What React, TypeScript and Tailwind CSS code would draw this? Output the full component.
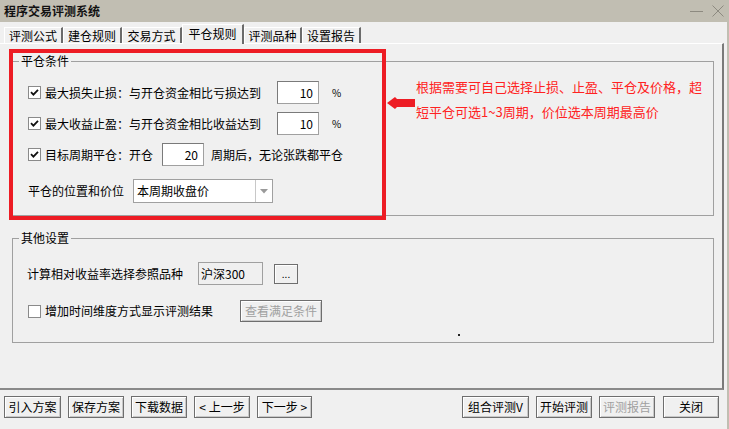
import React from 'react';

const font = { fontFamily: '"Noto Sans CJK SC", "Noto Sans", sans-serif' };

function Check({ checked }: { checked: boolean }) {
  return (
    <span className="w-[13px] h-[13px] bg-white border border-[#8a8a8a] flex items-center justify-center shrink-0">
      {checked && (
        <svg width="9" height="9" viewBox="0 0 9 9">
          <path d="M1 4.2 L3.4 6.6 L8 1.8" fill="none" stroke="#111" strokeWidth="1.8" />
        </svg>
      )}
    </span>
  );
}

function NumBox({ value, w }: { value: string; w: string }) {
  return (
    <div className={`${w} h-[23px] bg-white border border-[#a0a0a0] border-t-[#7a7a7a] border-l-[#7a7a7a] flex items-center justify-end pr-[5px] text-[12px]`}>
      {value}
    </div>
  );
}

function Btn({ label, w, disabled }: { label: string; w: string; disabled?: boolean }) {
  return (
    <button
      className={`${w} h-[22px] border border-[#6e6e6e] bg-[#f0f0f0] shadow-[inset_1px_1px_0_#fff,inset_-1px_-1px_0_#c8c8c8] text-[12px] leading-none flex items-center justify-center ${
        disabled ? 'text-[#a0a0a0]' : 'text-black'
      }`}
    >
      {label}
    </button>
  );
}

const tabs = [
  { name: '评测公式', w: 'w-[59px]' },
  { name: '建仓规则', w: 'w-[59px]' },
  { name: '交易方式', w: 'w-[60px]' },
  { name: '平仓规则', w: 'w-[62px]', active: true },
  { name: '评测品种', w: 'w-[58px]' },
  { name: '设置报告', w: 'w-[59px]' },
];

export default function App() {
  return (
    <div className="w-[729px] h-[429px] bg-[#f0f0f0] relative overflow-hidden text-black border-r-[2px] border-[#c1beb2]" style={font}>
      {/* title bar */}
      <div className="h-[22px] bg-[#c1beb2] flex items-center justify-between pl-[4px] pr-[3px]">
        <span className="text-[12px] font-bold text-[#111]">程序交易评测系统</span>
        <div className="flex items-center gap-[9px]">
          <span className="w-[13px] h-[1px] bg-[#8d8a80] mt-[1px]"></span>
          <svg width="12" height="12" viewBox="0 0 12 12">
            <path d="M0.5 0.5 L11.5 11.5 M11.5 0.5 L0.5 11.5" stroke="#8d8a80" strokeWidth="1" />
          </svg>
        </div>
      </div>

      {/* tabs */}
      <div className="h-[21px] flex items-end pl-[4px]">
        {tabs.map((t) =>
          t.active ? (
            <div
              key={t.name}
              className={`${t.w} h-[20px] -mb-[1px] z-10 bg-[#f0f0f0] border-t border-l border-white border-r-[2px] border-r-[#6b6b6b] flex items-center justify-center text-[12px] pb-[1px]`}
            >
              {t.name}
            </div>
          ) : (
            <div
              key={t.name}
              className={`${t.w} h-[16px] bg-[#f0f0f0] border-t border-l border-white border-r-[2px] border-r-[#6b6b6b] flex items-center justify-center text-[12px]`}
            >
              {t.name}
            </div>
          )
        )}
      </div>

      {/* panel */}
      <div className="w-[724px] h-[347px] border-t border-t-white border-r-[2px] border-r-[#7a7a7a] border-b-[2px] border-b-[#8a8a8a] pl-[12px] pt-[17px] relative">
        {/* group 1 */}
        <div className="relative w-[702px] h-[155px] border border-[#a0a0a0]">
          <span className="absolute -top-[8px] left-[6px] px-[2px] bg-[#f0f0f0] text-[12px] leading-[14px]">平仓条件</span>
          <div className="pt-[19px] pl-[15px] flex flex-col">
            <div className="h-[23px] flex items-center">
              <Check checked />
              <span className="text-[12px] ml-[4px] w-[232px]">最大损失止损：与开仓资金相比亏损达到</span>
              <NumBox value="10" w="w-[42px]" />
              <span className="text-[10px] ml-[13px]">%</span>
            </div>
            <div className="h-[23px] flex items-center mt-[8px]">
              <Check checked />
              <span className="text-[12px] ml-[4px] w-[232px]">最大收益止盈：与开仓资金相比收益达到</span>
              <NumBox value="10" w="w-[42px]" />
              <span className="text-[10px] ml-[13px]">%</span>
            </div>
            <div className="h-[23px] flex items-center mt-[8px]">
              <Check checked />
              <span className="text-[12px] ml-[4px] w-[117px]">目标周期平仓：开仓</span>
              <NumBox value="20" w="w-[42px]" />
              <span className="text-[12px] ml-[7px]">周期后，无论张跌都平仓</span>
            </div>
            <div className="h-[24px] flex items-center mt-[13px]">
              <span className="text-[12px] w-[105px]">平仓的位置和价位</span>
              <div className="w-[140px] h-[24px] bg-white border border-[#a0a0a0] flex items-center">
                <span className="flex-1 text-[12px] pl-[3px]">本周期收盘价</span>
                <span className="w-[17px] h-full border-l border-[#c8c8c8] flex items-center justify-center">
                  <svg width="8" height="5" viewBox="0 0 8 5">
                    <path d="M0 0 L8 0 L4 4.5 Z" fill="#9a9a9a" />
                  </svg>
                </span>
              </div>
            </div>
          </div>
          {/* annotation */}
          <div className="absolute left-[403px] top-[12px] text-[13px] leading-[25px] text-[#ff2222]">
            <div>根据需要可自己选择止损、止盈、平仓及价格，超</div>
            <div>短平仓可选1~3周期，价位选本周期最高价</div>
          </div>
        </div>

        {/* group 2 */}
        <div className="relative w-[702px] h-[105px] border border-[#a0a0a0] mt-[22px]">
          <span className="absolute -top-[8px] left-[6px] px-[2px] bg-[#f0f0f0] text-[12px] leading-[14px]">其他设置</span>
          <div className="pt-[23px] pl-[14px] flex flex-col">
            <div className="h-[23px] flex items-center">
              <span className="text-[12px] w-[171px]">计算相对收益率选择参照品种</span>
              <div className="w-[65px] h-[23px] bg-[#f0f0f0] border border-[#a0a0a0] text-[12px] pl-[2px] flex items-start pt-[2px]">沪深300</div>
              <button className="ml-[11px] w-[24px] h-[20px] border border-[#6e6e6e] bg-[#f0f0f0] shadow-[inset_1px_1px_0_#fff] text-[10px] leading-none flex items-end justify-center pb-[4px]">...</button>
            </div>
            <div className="h-[22px] flex items-center mt-[15px]">
              <span className="ml-[1px]">
                <Check checked={false} />
              </span>
              <span className="text-[12px] ml-[4px] w-[195px]">增加时间维度方式显示评测结果</span>
              <Btn label="查看满足条件" w="w-[82px]" disabled />
            </div>
          </div>
          <span className="absolute left-[445px] top-[95px] w-[2px] h-[2px] bg-[#222]"></span>
        </div>

        {/* red highlight frame */}
        <div className="absolute left-[9px] top-[5px] w-[377px] h-[171px] border-[4px] border-[#ed1c24] pointer-events-none"></div>
        {/* arrow */}
        <svg className="absolute left-[387px] top-[52px]" width="29" height="14" viewBox="0 0 29 14">
          <path d="M0 7 L8 1 L10 3 L28 3 L28 11 L10 11 L8 13 Z" fill="#ed1c24" />
        </svg>
      </div>

      {/* bottom buttons */}
      <div className="flex items-center justify-between pl-[4px] pr-[8px] pt-[6px]">
        <div className="flex gap-[7px]">
          <Btn label="引入方案" w="w-[57px]" />
          <Btn label="保存方案" w="w-[56px]" />
          <Btn label="下载数据" w="w-[56px]" />
          <Btn label="< 上一步" w="w-[56px]" />
          <Btn label="下一步 >" w="w-[55px]" />
        </div>
        <div className="flex gap-[7px]">
          <Btn label="组合评测V" w="w-[67px]" />
          <Btn label="开始评测" w="w-[56px]" />
          <Btn label="评测报告" w="w-[56px]" disabled />
          <span className="ml-[1px]">
            <Btn label="关闭" w="w-[56px]" />
          </span>
        </div>
      </div>
    </div>
  );
}
